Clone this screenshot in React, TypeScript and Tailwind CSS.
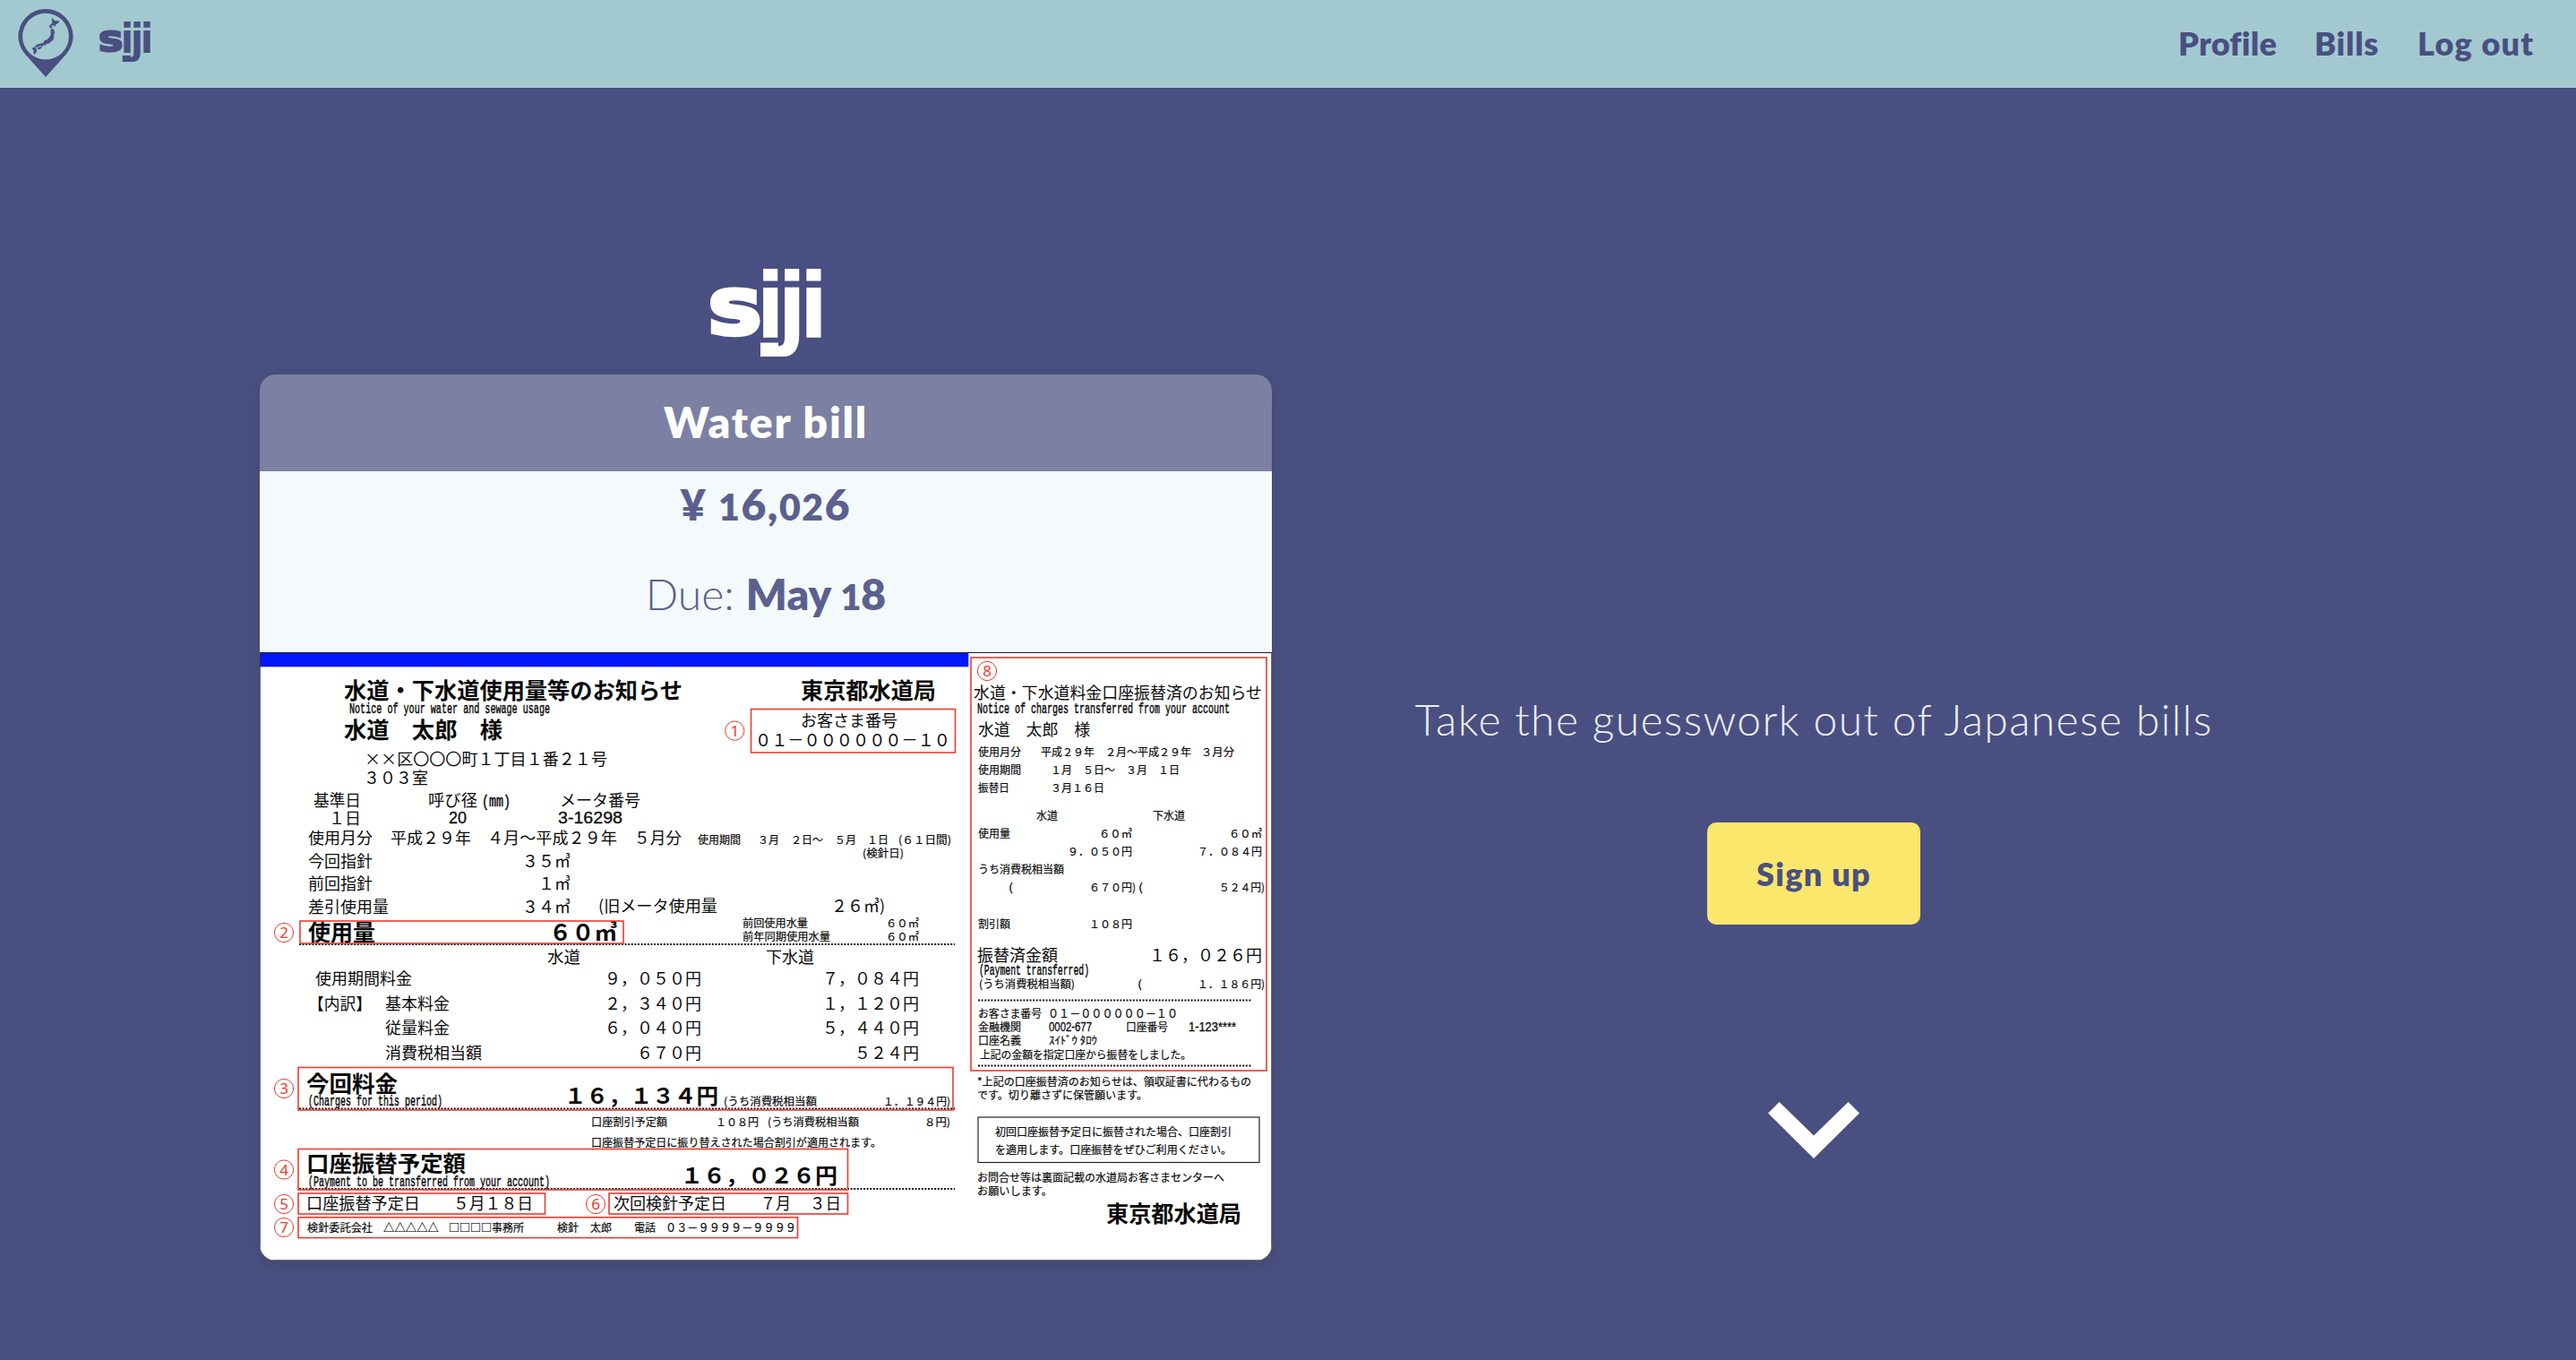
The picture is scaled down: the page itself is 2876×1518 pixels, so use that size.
const GOTHIC = '"Noto Sans CJK JP", sans-serif';
const HALF = '"Liberation Mono", "Noto Sans CJK JP", monospace';
const SANS = '"Liberation Sans", sans-serif';

// [text, left, width, ink bottom, size]
type Entry = [string, number, number, number, number];

const boldText: Entry[] = [
  ['水道・下水道使用量等のお知らせ', 385, 378, 783, 25],
  ['水道　太郎　様', 385, 177, 827, 25],
  ['東京都水道局', 895, 151, 783, 25],
  ['使用量', 345, 75, 1053, 25],
  ['６０㎥', 614, 76, 1053, 25],
  ['今回料金', 343, 102, 1222, 25],
  ['１６，１３４円', 631, 172, 1235, 24],
  ['口座振替予定額', 343, 178, 1311, 25],
  ['１６，０２６円', 761, 175, 1324, 24],
  ['東京都水道局', 1236, 151, 1367, 25],
];

const text: Entry[] = [
  ['お客さま番号', 895, 108, 813, 18],
  ['０１－００００００－１０', 844, 218, 835, 19],
  ['××区〇〇〇町１丁目１番２１号', 408, 271, 856, 18],
  ['３０３室', 407, 72, 877, 18],
  ['基準日', 351, 53, 902, 18],
  ['呼び径', 479, 55, 902, 18],
  ['メータ番号', 626, 90, 902, 18],
  ['１日', 368, 36, 922, 18],
  ['使用月分', 345, 72, 944, 18],
  ['平成２９年', 437, 90, 944, 18],
  ['４月～平成２９年', 545, 145, 944, 18],
  ['５月分', 709, 53, 944, 18],
  ['今回指針', 345, 72, 970, 18],
  ['３５㎥', 584, 54, 970, 18],
  ['前回指針', 345, 72, 995, 18],
  ['１㎥', 602, 36, 995, 18],
  ['差引使用量', 345, 90, 1021, 18],
  ['３４㎥', 584, 54, 1021, 18],
  ['(旧メータ使用量', 669, 133, 1020, 18],
  ['２６㎥)', 929, 60, 1020, 18],
  ['水道', 612, 37, 1077, 18],
  ['下水道', 856, 54, 1077, 18],
  ['使用期間料金', 353, 108, 1101, 18],
  ['９，０５０円', 676, 108, 1101, 18],
  ['７，０８４円', 919, 108, 1101, 18],
  ['【内訳】', 345, 71, 1129, 18],
  ['基本料金', 431, 72, 1129, 18],
  ['２，３４０円', 676, 108, 1129, 18],
  ['１，１２０円', 919, 108, 1129, 18],
  ['従量料金', 431, 72, 1156, 18],
  ['６，０４０円', 676, 108, 1156, 18],
  ['５，４４０円', 919, 108, 1156, 18],
  ['消費税相当額', 431, 108, 1184, 18],
  ['６７０円', 712, 72, 1184, 18],
  ['５２４円', 955, 72, 1184, 18],
  ['口座振替予定日', 343, 127, 1352, 18],
  ['５月１８日', 507, 89, 1352, 18],
  ['次回検針予定日', 686, 126, 1352, 18],
  ['７月', 850, 34, 1352, 18],
  ['３日', 905, 35, 1352, 18],
  ['水道・下水道料金口座振替済のお知らせ', 1088, 322, 782, 18],
  ['水道　太郎　様', 1093, 125, 823, 18],
  ['振替済金額', 1092, 90, 1075, 18],
  ['１６，０２６円', 1284, 126, 1075, 18],
];

const smallText: Entry[] = [
  ['使用期間', 779, 48, 943, 12],
  ['３月', 846, 24, 943, 12],
  ['２日～', 883, 36, 943, 12],
  ['５月', 932, 24, 943, 12],
  ['１日', 968, 24, 943, 12],
  ['(６１日間)', 1003, 59, 943, 12],
  ['(検針日)', 963, 46, 958, 12],
  ['前回使用水量', 829, 73, 1036, 12],
  ['６０㎥', 989, 37, 1036, 12],
  ['前年同期使用水量', 829, 98, 1051, 12],
  ['６０㎥', 989, 37, 1051, 12],
  ['(うち消費税相当額', 808, 104, 1235, 12],
  ['１．１９４円)', 986, 75, 1235, 12],
  ['口座割引予定額', 660, 85, 1258, 12],
  ['１０８円', 799, 48, 1258, 12],
  ['(うち消費税相当額', 857, 102, 1258, 12],
  ['８円)', 1032, 29, 1258, 12],
  ['口座振替予定日に振り替えされた場合割引が適用されます。', 660, 324, 1281, 12],
  ['検針委託会社', 343, 73, 1376, 12],
  ['△△△△△', 428, 62, 1376, 12],
  ['□□□□事務所', 501, 84, 1376, 12],
  ['検針', 622, 24, 1376, 12],
  ['太郎', 659, 24, 1376, 12],
  ['電話', 708, 24, 1376, 12],
  ['０３－９９９９－９９９９', 743, 146, 1376, 13],
  ['使用月分', 1092, 48, 845, 12],
  ['平成２９年', 1162, 60, 845, 12],
  ['２月～平成２９年', 1234, 96, 845, 12],
  ['３月分', 1341, 37, 845, 12],
  ['使用期間', 1092, 48, 865, 12],
  ['１月', 1173, 24, 865, 12],
  ['５日～', 1209, 36, 865, 12],
  ['３月', 1257, 24, 865, 12],
  ['１日', 1293, 24, 865, 12],
  ['振替日', 1092, 35, 885, 12],
  ['３月１６日', 1173, 60, 885, 12],
  ['水道', 1157, 24, 916, 12],
  ['下水道', 1287, 36, 916, 12],
  ['使用量', 1092, 36, 936, 12],
  ['６０㎥', 1227, 37, 936, 12],
  ['６０㎥', 1372, 37, 936, 12],
  ['９．０５０円', 1192, 72, 956, 12],
  ['７．０８４円', 1337, 72, 956, 12],
  ['うち消費税相当額', 1092, 96, 976, 12],
  ['(', 1126, 5, 996, 12],
  ['６７０円)', 1216, 52, 996, 12],
  ['(', 1271, 5, 996, 12],
  ['５２４円)', 1361, 51, 996, 12],
  ['割引額', 1092, 36, 1037, 12],
  ['１０８円', 1216, 48, 1037, 12],
  ['(うち消費税相当額)', 1093, 107, 1104, 12],
  ['(', 1270, 5, 1104, 12],
  ['１．１８６円)', 1337, 75, 1104, 12],
  ['お客さま番号', 1092, 71, 1137, 12],
  ['０１－００００００－１０', 1170, 145, 1137, 13],
  ['金融機関', 1092, 48, 1152, 12],
  ['口座番号', 1257, 47, 1152, 12],
  ['口座名義', 1092, 48, 1167, 12],
  ['ｽｲﾄﾞｳ ﾀﾛｳ', 1171, 54, 1167, 12],
  ['上記の金額を指定口座から振替をしました。', 1094, 236, 1183, 12],
  ['*上記の口座振替済のお知らせは、領収証書に代わるもの', 1091, 306, 1213, 12],
  ['です。切り離さずに保管願います。', 1091, 190, 1228, 12],
  ['初回口座振替予定日に振替された場合、口座割引', 1111, 264, 1269, 12],
  ['を適用します。口座振替をぜひご利用ください。', 1111, 264, 1289, 12],
  ['お問合せ等は裏面記載の水道局お客さまセンターへ', 1091, 276, 1320, 12],
  ['お願いします。', 1091, 84, 1335, 12],
];

// Half-width latin text: the fourth value is the baseline.
const latin: Entry[] = [
  ['Notice of your water and sewage usage', 390, 224, 796, 17],
  ['(mm)', 538, 32, 900, 18],
  ['(Charges for this period)', 344, 150, 1234, 17],
  ['(Payment to be transferred from your account)', 344, 270, 1323.5, 17],
  ['Notice of charges transferred from your account', 1091, 282, 796, 17],
  ['(Payment transferred)', 1093, 123, 1087.5, 17],
];

const digits: Entry[] = [
  ['20', 501, 20, 919, 18],
  ['3-16298', 623, 72, 919, 18],
  ['0002-677', 1171, 48, 1151, 14],
  ['1-123****', 1327, 53, 1151, 14],
];

const boxes = [
  [838.5, 791.5, 228, 48.5],
  [335, 1028, 361, 25],
  [333, 1191.5, 731, 47.5],
  [333, 1282.5, 613.5, 45.5],
  [333, 1332, 275.5, 23],
  [680, 1332, 266.5, 23],
  [333, 1358.8, 557.5, 22.8],
  [1084, 734, 330, 461],
];

const marks: [string, number, number][] = [
  ['1', 820.3, 815.7],
  ['2', 317, 1041],
  ['3', 317, 1215],
  ['4', 317, 1305.5],
  ['5', 317, 1344],
  ['6', 665, 1344],
  ['7', 317, 1370],
  ['8', 1102, 749],
];

const dotted = [
  [334, 1066, 1054],
  [334, 1066, 1237.5],
  [334, 1066, 1327],
  [1092, 1397, 1116.5],
  [1092, 1397, 1189.5],
];

function Line({
  e,
  family,
  weight,
  baseline,
  bleed = 0,
}: {
  e: Entry;
  family: string;
  weight: number;
  baseline?: boolean;
  bleed?: number;
}) {
  const [t, x, w, y, size] = e;
  return (
    <text
      x={baseline || size < 18 ? x : x - 1}
      y={baseline ? y : y - size * 0.11}
      fontSize={size}
      fontFamily={family}
      fontWeight={weight}
      textLength={w}
      lengthAdjust="spacingAndGlyphs"
      xmlSpace="preserve"
      stroke={bleed ? '#0a0a0a' : 'none'}
      strokeWidth={bleed}
    >
      {t}
    </text>
  );
}

function BillScan() {
  return (
    <svg viewBox="290 728 1130 679" className="block h-[679px] w-[1130px] bg-white" fill="#0a0a0a">
      <rect x="290" y="728" width="791.3" height="16.3" fill="#0018fa" />
      <path d="M290 728.5H1420" stroke="#1a1a2c" strokeWidth="1" />
      <path d="M290.4 728V1407M1419.6 728V1407M290 1406.6H1420" stroke="#333" strokeWidth="0.8" />
      {dotted.map(([a, b, y]) => (
        <path key={`${a}-${y}`} d={`M${a} ${y}H${b}`} stroke="#111" strokeWidth="2" strokeDasharray="2 1.6" />
      ))}
      {boldText.map((e) => (
        <Line key={e.join()} e={e} family={GOTHIC} weight={700} />
      ))}
      {text.map((e) => (
        <Line key={e.join()} e={e} family={GOTHIC} weight={400} />
      ))}
      {smallText.map((e) => (
        <Line key={e.join()} e={e} family={GOTHIC} weight={400} bleed={0.2} />
      ))}
      {latin.map((e) => (
        <Line key={e.join()} e={e} family={HALF} weight={400} baseline bleed={0.5} />
      ))}
      {digits.map((e) => (
        <Line key={e.join()} e={e} family={SANS} weight={400} baseline bleed={0.3} />
      ))}
      <rect x="1092" y="1247" width="314" height="50.5" fill="none" stroke="#222" strokeWidth="1.2" />
      {boxes.map(([x, y, w, h]) => (
        <rect key={`${x}-${y}`} x={x} y={y} width={w} height={h} fill="none" stroke="#ee3a2c" strokeWidth="1.6" />
      ))}
      {marks.map(([n, x, y]) => (
        <g key={n}>
          <circle cx={x} cy={y} r="10.6" fill="none" stroke="#ee3a2c" strokeWidth="1" />
          <text x={x} y={y + 6.3} fontSize="17" fontFamily='"Noto Sans", sans-serif' textAnchor="middle" fill="#ee3a2c">
            {n}
          </text>
        </g>
      ))}
    </svg>
  );
}

function Wordmark({ className }: { className: string }) {
  return (
    <svg
      viewBox="0 0 124 98"
      className={className}
      fill="currentColor"
      fontFamily='"DejaVu Sans", sans-serif'
      fontWeight="700"
      fontSize="100.6"
    >
      <text transform="translate(-2.8 72.8) scale(1.01 .89)" stroke="currentColor" strokeWidth="5">
        s
      </text>
      <text transform="translate(51.6 76) scale(.91 1.01)" x="0 26.4 52.8">
        iji
      </text>
      <rect x="56" y="82.500" width="20" height="15.500" />
    </svg>
  );
}

function Pin() {
  return (
    <svg viewBox="20 8 62 78" className="-mt-[3px] h-[78px] w-[62px]" fill="#495081">
      <path
        fillRule="evenodd"
        d="M51 9A30.6 30.6 0 0 1 81.6 39.6C81.6 48 78 55 73 60.500L51 85L29 60.500C24 55 20.400 48 20.400 39.600A30.600 30.600 0 0 1 51 9ZM51 13.700A25.900 25.900 0 1 0 51 65.500A25.900 25.900 0 1 0 51 13.700Z"
      />
      <g stroke="#495081" strokeWidth="0.7" strokeLinejoin="round">
        <path d="M58.200 19.500L61.500 22.500L66 22.700L65 24.500L62 26.200L61.600 28.200L58.600 26.700L57.400 27.800L58.200 29.400L56.200 30.300L55.200 28.300L57 26L58.600 24.800Z" />
        <path d="M57.300 31L59.800 32L60.800 35.500L59.700 38.500L59.900 42L58.300 44.500L56.500 45L55.200 47L52.500 47.400L50.800 49.300L48.500 48.800L47.400 50.500L45 49.800L42.500 50.800L40 51.500L38.800 51L42 48.700L46 47.800L48.500 47L50.300 43.800L51.700 44.200L55 41.200L57 37.500L57 34Z" />
        <path d="M42 52.300L46.500 51.200L45.500 53L43 54Z" />
        <path d="M36 52.700L39.500 52L41 54.500L39.800 58.400L38 59.300L37.700 55.500Z" />
      </g>
    </svg>
  );
}

export default function App() {
  return (
    <div className="h-[1518px] w-[2876px] overflow-hidden bg-[#495081] font-['Lato',sans-serif]">
      <header className="flex h-[98px] items-center justify-between bg-[#a3c9d0] pl-5 pr-[46px] text-[#495081]">
        <div className="flex items-center gap-[29px]">
          <Pin />
          <Wordmark className="-mt-[5px] h-[45px] w-[57px]" />
        </div>
        <nav className="-mt-[2px] flex gap-[42px] text-[36px] font-extrabold leading-none">
          <a className="w-[110px] whitespace-nowrap tracking-[0.3px]">Profile</a>
          <a className="w-[73px] whitespace-nowrap tracking-[0.8px]">Bills</a>
          <a className="w-[131px] whitespace-nowrap tracking-[1.2px]">Log out</a>
        </nav>
      </header>

      <main className="ml-[290px] flex">
        <section className="w-[1130px] pt-[202px]">
          <Wordmark className="mx-auto mb-[20px] block h-[98px] w-[124px] text-white" />
          <div className="w-[1130px] overflow-hidden rounded-[18px] shadow-[0_8px_14px_rgba(60,60,80,0.3)]">
            <div className="flex h-[108px] items-center justify-center bg-[#7c80a3] pb-[3px] text-[48px] font-extrabold leading-none tracking-[1.8px] text-white">
              <span>Water bill</span>
            </div>
            <div className="flex h-[202px] flex-col items-center bg-[#f4fafc] pt-3 text-[48px] leading-[50px] text-[#5b608f]">
              <p className="font-extrabold tracking-[1.6px]">
                ¥ <span className="text-[41px]">1</span>6,<span className="text-[41px]">02</span>6
              </p>
              <p className="mt-[47px] font-light">
                Due:{' '}
                <span className="font-extrabold">
                  May <span className="text-[40px]">1</span>8
                </span>
              </p>
            </div>
            <BillScan />
          </div>
        </section>

        <section className="ml-[145px] flex w-[920px] flex-col items-center pt-[676px]">
          <p className="whitespace-nowrap text-[48px] font-light leading-[58px] tracking-[1.4px] text-[#eeeef4]">
            Take the guesswork out of Japanese bills
          </p>
          <button className="mt-[86px] h-[114px] w-[238px] rounded-[10px] bg-[#fbe76b] text-[36px] font-extrabold tracking-[1.3px] text-[#495081]">
            Sign up
          </button>
          <svg viewBox="0 0 102 63" className="mt-[198px] h-[63px] w-[102px]" fill="#fff">
            <path d="M12.500 0L51 37.500L89.500 0L102 12.500L51 63L0 12.500Z" />
          </svg>
        </section>
      </main>
    </div>
  );
}
